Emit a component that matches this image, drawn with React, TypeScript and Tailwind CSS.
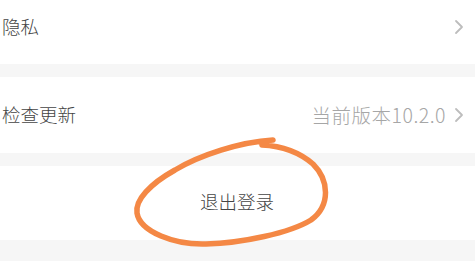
// Settings list tail - privacy, update check and logout, with a hand-drawn highlight

const font = "font-['Noto_Sans_CJK_SC','Noto_Sans',sans-serif] font-light";

const Chevron = () => (
  <svg width="10" height="16" viewBox="0 0 10 16" className="shrink-0">
    <path d="M2 2 L8 8 L2 14" fill="none" stroke="#bdbdbd" strokeWidth="1.8" strokeLinecap="round" strokeLinejoin="round" />
  </svg>
);

export default function App() {
  return (
    <div className={`relative w-[475px] h-[261px] overflow-hidden bg-[#f6f6f6] ${font}`}>
      {/* Privacy row */}
      <div className="h-[64px] bg-white flex items-center justify-between pl-[2px] pr-[11px] pb-[10px]">
        <span className="text-[18.5px] text-[#444]">隐私</span>
        <Chevron />
      </div>

      {/* Check update row */}
      <div className="mt-[13px] h-[76px] bg-white flex items-center justify-between pl-[2px] pr-[11px]">
        <span className="text-[18.5px] text-[#444]">检查更新</span>
        <div className="flex items-center gap-[8px]">
          <span className="text-[19.5px] tracking-[0.5px] text-[#a6a6a6]">当前版本10.2.0</span>
          <Chevron />
        </div>
      </div>

      {/* Logout row */}
      <div className="mt-[13px] h-[74px] bg-white flex items-center justify-center">
        <span className="text-[18.5px] text-[#444] pr-[1px] pb-[2px]">退出登录</span>
      </div>

      {/* Hand-drawn annotation */}
      <svg className="absolute inset-0 pointer-events-none" width="475" height="261" viewBox="0 0 475 261">
        <path
          d="M273 140 C240 142 200 155 175 170 C150 184 135 200 137 213 C140 232 175 245 206 244 C242 243 290 233 311 220 C331 205 329 180 313 164 C298 151 282 146 262 145"
          fill="none"
          stroke="#f48845"
          strokeWidth="5.5"
          strokeLinecap="round"
          strokeLinejoin="round"
        />
      </svg>
    </div>
  );
}
